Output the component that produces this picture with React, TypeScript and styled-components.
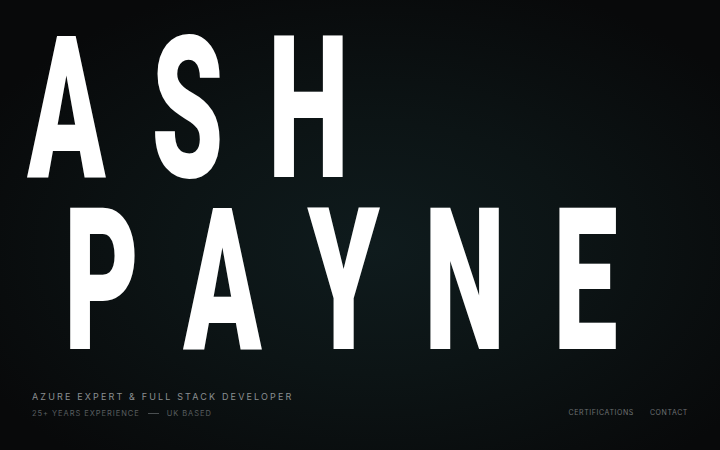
import styled, { createGlobalStyle } from "styled-components";

const GlobalStyle = createGlobalStyle`
  html, body {
    margin: 0;
    padding: 0;
    background: #08090a;
  }
  * {
    box-sizing: border-box;
  }
`;

const Page = styled.main`
  width: 100vw;
  height: 100vh;
  overflow: hidden;
  display: flex;
  flex-direction: column;
  justify-content: space-between;
  background: radial-gradient(
    ellipse 62% 62% at 52% 55%,
    #0f1b1d 0%,
    #0c1415 45%,
    #08090a 100%
  );
  font-family: Inter, "Liberation Sans", sans-serif;
`;

const Hero = styled.h1`
  margin: 0;
  padding-top: 11px;
  display: flex;
  flex-direction: column;
  font-family: Roboto, "Liberation Sans", sans-serif;
  font-weight: 900;
  font-size: 115px;
  line-height: 100px;
  color: #ffffff;
`;

const Word = styled.div<{ $indent: number }>`
  height: 172px;
  display: flex;
  padding-left: ${(p) => p.$indent}px;
`;

const Letter = styled.span`
  display: inline-block;
  width: 121px;
  text-align: center;
  transform: scaleY(1.72);
  transform-origin: 50% 0;
  margin-top: 13px;
`;

const Footer = styled.footer`
  display: flex;
  justify-content: space-between;
  align-items: flex-end;
  padding: 0 32px 32px 32px;
`;

const Intro = styled.div`
  display: flex;
  flex-direction: column;
  gap: 7px;
`;

const Role = styled.p`
  margin: 0;
  font-size: 9px;
  letter-spacing: 2.15px;
  color: #8a8f91;
  text-transform: uppercase;
`;

const Meta = styled.p`
  margin: 0;
  display: flex;
  align-items: center;
  gap: 8px;
  font-size: 7.5px;
  letter-spacing: 0.95px;
  color: #595e60;
  text-transform: uppercase;
`;

const Dash = styled.span`
  display: inline-block;
  width: 11px;
  height: 1px;
  background: #4a4f51;
`;

const Nav = styled.nav`
  display: flex;
  gap: 16px;
  padding-bottom: 1px;
`;

const NavLink = styled.a`
  font-size: 7px;
  letter-spacing: 0.6px;
  color: #6d7173;
  text-decoration: none;
  text-transform: uppercase;
`;

function App() {
  return (
    <Page>
      <GlobalStyle />
      <Hero>
        <Word $indent={6}>
          {"ASH".split("").map((c, i) => (
            <Letter key={i}>{c}</Letter>
          ))}
        </Word>
        <Word $indent={41}>
          {"PAYNE".split("").map((c, i) => (
            <Letter key={i}>{c}</Letter>
          ))}
        </Word>
      </Hero>
      <Footer>
        <Intro>
          <Role>Azure Expert &amp; Full Stack Developer</Role>
          <Meta>
            <span>25+ Years Experience</span>
            <Dash />
            <span>UK Based</span>
          </Meta>
        </Intro>
        <Nav>
          <NavLink href="#certifications">Certifications</NavLink>
          <NavLink href="#contact">Contact</NavLink>
        </Nav>
      </Footer>
    </Page>
  );
}

export default App;
